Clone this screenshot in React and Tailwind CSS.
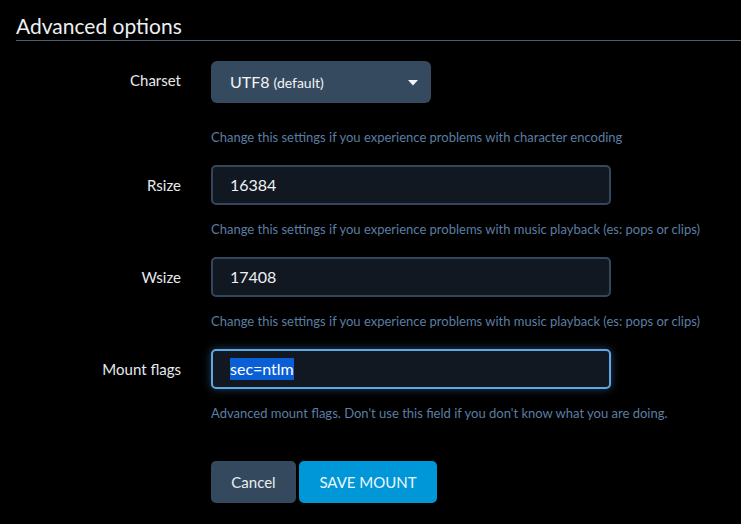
import React from "react";

const Help = ({ children, className = "" }) => (
  <div className={`text-[13px] leading-[18px] text-[#5b7ea3] ${className}`}>{children}</div>
);

const Row = ({ label, children, help, helpClass = "mt-[15px]", className = "" }) => (
  <div className={`flex ${className}`}>
    <div className="w-[165px] h-[40px] flex items-center justify-end text-[15px] text-[#e6e9ee]">{label}</div>
    <div className="ml-[30px] flex flex-col">
      {children}
      <Help className={helpClass}>{help}</Help>
    </div>
  </div>
);

const TextBox = ({ value, focused }) => (
  <div
    className={`w-[400px] h-[40px] rounded-[5px] bg-[#121821] border-2 flex items-center pl-[17px] text-[16px] text-[#eef1f4] ${
      focused ? "border-[#5ea8e6] shadow-[0_0_8px_rgba(80,150,220,0.45)]" : "border-[#33475c]"
    }`}
  >
    {focused ? <span className="bg-[#0a5fd6] text-white leading-[22px]">{value}</span> : value}
  </div>
);

export default function App() {
  return (
    <div className="min-h-screen bg-black pl-4 pt-[13px] font-['Lato','Open_Sans',sans-serif]">
      <div className="text-[21px] leading-[26px] text-[#eceff3] pb-[1px] border-b border-[#4a5f78]">Advanced options</div>

      <div className="mt-[20px]">
        <div className="flex">
          <div className="w-[165px] h-[42px] flex items-center justify-end text-[15px] text-[#e6e9ee] -mt-[2px]">Charset</div>
          <div className="ml-[30px] flex flex-col">
            <div className="w-[220px] h-[42px] rounded-[6px] bg-[#364a5f] flex items-center pl-[19px] pr-[13px] text-[#f2f4f7]">
              <span className="text-[16px]">UTF8</span>
              <span className="text-[14px] ml-[4px]">(default)</span>
              <svg className="ml-auto mt-[2px]" width="10" height="6" viewBox="0 0 10 6">
                <path d="M0 0h10L5 5.5z" fill="#f2f4f7" />
              </svg>
            </div>
            <Help className="mt-[25px]">Change this settings if you experience problems with character encoding</Help>
          </div>
        </div>

        <Row label="Rsize" className="mt-[19px]" help="Change this settings if you experience problems with music playback (es: pops or clips)">
          <TextBox value="16384" />
        </Row>

        <Row label="Wsize" className="mt-[19px]" help="Change this settings if you experience problems with music playback (es: pops or clips)">
          <TextBox value="17408" />
        </Row>

        <Row label="Mount flags" className="mt-[19px]" help="Advanced mount flags. Don't use this field if you don't know what you are doing.">
          <TextBox value="sec=ntlm" focused />
        </Row>

        <div className="flex ml-[195px] mt-[39px] gap-[3px]">
          <button className="h-[42px] w-[85px] rounded-[5px] bg-[#34495e] text-[15px] text-[#e9edf1]">Cancel</button>
          <button className="h-[42px] w-[138px] rounded-[5px] bg-[#0097d8] text-[15px] text-[#eef6fb]">SAVE MOUNT</button>
        </div>
      </div>
    </div>
  );
}
